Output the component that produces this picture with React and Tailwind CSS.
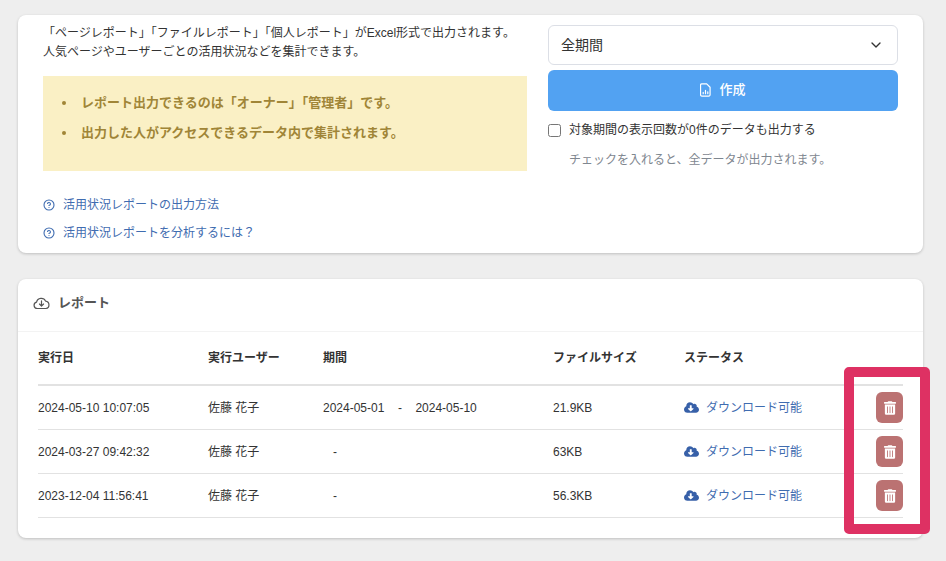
import { ChevronDown, CircleHelp } from 'lucide-react';
import { FaCloudDownloadAlt, FaTrashAlt } from 'react-icons/fa';

const font = 'font-["Liberation_Sans","Noto_Sans_CJK_JP",sans-serif]';

const rows = [
  { date: '2024-05-10 10:07:05', from: '2024-05-01', to: '2024-05-10', size: '21.9KB' },
  { date: '2024-03-27 09:42:32', size: '63KB' },
  { date: '2023-12-04 11:56:41', size: '56.3KB' },
];

const cols = 'grid grid-cols-[170px_115px_230px_131px_1fr] items-center';

function HelpLink({ children }) {
  return (
    <a href="#" className="flex items-center gap-[8px] text-xs text-[#3f6cb0] h-[28px]">
      <CircleHelp className="w-[12px] h-[12px]" strokeWidth={2.2} />
      {children}
    </a>
  );
}

function CloudOutline() {
  return (
    <svg viewBox="0 0 20 16" className="w-[17px] h-[14px] text-[#555]" fill="none" stroke="currentColor" strokeWidth="1.4">
      <path d="M5 14.500a3.800 3.800 0 0 1-.8-7.500 5.600 5.600 0 0 1 10.600-1.200 4.400 4.400 0 0 1 .4 8.700z" strokeLinejoin="round" />
      <path d="M10 5.500v6M7.600 9.200 10 11.600l2.400-2.400" strokeLinecap="round" strokeLinejoin="round" />
    </svg>
  );
}

function FileChart() {
  return (
    <svg viewBox="0 0 12 15" className="w-[11px] h-[14px]" fill="none" stroke="currentColor" strokeWidth="1.3">
      <path d="M2 .8h5.300L11 4.500v8.200a1.400 1.400 0 0 1-1.400 1.400H2a1.400 1.400 0 0 1-1.400-1.400V2.200A1.400 1.400 0 0 1 2 .8z" strokeLinejoin="round" />
      <path d="M3.500 11.500v-1.500M6 11.500V8M8.500 11.500V9.500" strokeLinecap="round" />
    </svg>
  );
}

export default function App() {
  return (
    <div className={`relative min-h-[561px] bg-[#eeeeee] pl-[18px] pr-[23px] pt-[15px] pb-[23px] text-[#333] ${font}`}>
      <section className="flex h-[238px] justify-between rounded-lg bg-white px-[25px] shadow-[0_1px_3px_rgba(0,0,0,0.2)]">
        <div className="w-[484px]">
          <p className="pt-[9px] text-xs leading-[19px] text-[#333]">
            「ページレポート」「ファイルレポート」「個人レポート」がExcel形式で出力されます。
            <br />
            人気ページやユーザーごとの活用状況などを集計できます。
          </p>
          <ul className="mt-[14px] h-[95px] bg-[#faf0c5] pl-[19px] pt-[12px] text-[13px] font-bold text-[#a08537]">
            <li className="flex h-[30px] items-center gap-[15px]">
              <span className="h-[4px] w-[4px] rounded-full bg-[#a08537]" />
              レポート出力できるのは「オーナー」「管理者」です。
            </li>
            <li className="flex h-[30px] items-center gap-[15px]">
              <span className="h-[4px] w-[4px] rounded-full bg-[#a08537]" />
              出力した人がアクセスできるデータ内で集計されます。
            </li>
          </ul>
          <div className="mt-[20px]">
            <HelpLink>活用状況レポートの出力方法</HelpLink>
            <HelpLink>活用状況レポートを分析するには？</HelpLink>
          </div>
        </div>

        <div className="w-[350px] pt-[10px]">
          <div className="flex h-[40px] items-center justify-between rounded-md border border-[#dcdfe6] pl-[12px] pr-[13px] text-sm text-[#333]">
            全期間
            <ChevronDown className="mb-[1px] h-[16px] w-[16px]" strokeWidth={2} />
          </div>
          <button className="mt-[5px] flex h-[41px] w-full items-center justify-center gap-[8px] rounded-md bg-[#52a2f2] pb-[1px] text-[13px] font-medium text-white">
            <FileChart />
            作成
          </button>
          <label className="mt-[11px] flex h-[16px] items-center gap-[8px] text-xs text-[#333]">
            <input type="checkbox" className="m-0 h-[13px] w-[13px]" />
            対象期間の表示回数が0件のデータも出力する
          </label>
          <p className="mt-[14px] pl-[21px] text-xs text-[#7f8790]">チェックを入れると、全データが出力されます。</p>
        </div>
      </section>

      <section className="mt-[26px] h-[259px] rounded-lg bg-white shadow-[0_1px_3px_rgba(0,0,0,0.2)]">
        <header className="flex h-[53px] items-center gap-[8px] border-b border-[#f3f3f3] pb-[4px] pl-[15px] text-[13px] font-bold text-[#555]">
          <CloudOutline />
          レポート
        </header>
        <div className="px-[20px]">
          <div className={`${cols} h-[54px] border-b-2 border-[#e2e2e2] text-xs font-bold text-[#333]`}>
            <span>実行日</span>
            <span>実行ユーザー</span>
            <span>期間</span>
            <span>ファイルサイズ</span>
            <span>ステータス</span>
          </div>
          {rows.map((row) => (
            <div key={row.date} className={`${cols} h-[44px] border-b border-[#e2e2e2] text-xs text-[#333]`}>
              <span>{row.date}</span>
              <span>佐藤 花子</span>
              {row.from ? (
                <span className="flex">
                  <span>{row.from}</span>
                  <span className="w-[31px] text-center">-</span>
                  <span>{row.to}</span>
                </span>
              ) : (
                <span className="pl-[10px]">-</span>
              )}
              <span>{row.size}</span>
              <span className="flex items-center justify-between">
                <a href="#" className="flex items-center gap-[7px] text-[#3f6cb0]">
                  <FaCloudDownloadAlt className="h-[15px] w-[15px] text-[#3760a8]" />
                  ダウンロード可能
                </a>
                <button className="flex h-[31px] w-[27px] items-center justify-center rounded-md bg-[#bb7272] text-white">
                  <FaTrashAlt className="h-[14px] w-[12px]" />
                </button>
              </span>
            </div>
          ))}
        </div>
      </section>

      <div className="pointer-events-none absolute left-[844px] top-[367px] h-[167px] w-[86px] rounded-[5px] border-[10px] border-[#de3163]" />
    </div>
  );
}
